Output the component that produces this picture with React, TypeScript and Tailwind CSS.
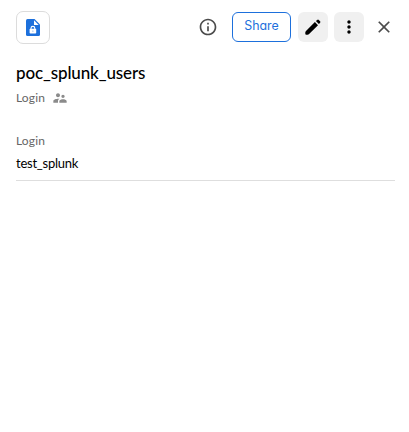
import React from "react";
import { MdInfoOutline, MdMoreVert, MdSupervisorAccount, MdClose } from "react-icons/md";

function SecureNoteIcon() {
  return (
    <svg width="14" height="17" viewBox="0 0 14 17">
      <path d="M1.5 0H8.5L14 5.5V15.5Q14 17 12.5 17H1.5Q0 17 0 15.5V1.5Q0 0 1.5 0Z" fill="#1d70dc" />
      <path d="M8 1.3V6H12.7Z" fill="white" />
      <rect x="3.6" y="9.7" width="6.6" height="4.8" rx=".8" fill="white" />
      <path d="M5 10V9.3a1.9 1.9 0 0 1 3.8 0V10" fill="none" stroke="white" strokeWidth="1.1" />
      <circle cx="6.9" cy="12.1" r=".6" fill="#6ca2e8" />
    </svg>
  );
}

function PencilIcon() {
  return (
    <svg width="16" height="16" viewBox="0 0 16 16" fill="black">
      <path d="M1 12 9.9 3.1 13 6.2 4.1 15.1Q3.5 15.7 2.5 15.7H1.2Q.3 15.7.3 14.8V13.6Q.3 12.7 1 12Z" />
      <path d="M10.9 2.1 12.2.9Q13 .2 13.8.9L15.1 2.2Q15.8 3 15.1 3.8L13.9 5.1Z" />
    </svg>
  );
}

export default function App() {
  return (
    <main className="h-[432px] w-[409px] bg-white pl-4 pr-[15px] pt-[11px] font-['Lato',sans-serif] text-black">
      <header className="flex h-[33px] items-center justify-between">
        <div className="flex h-[33px] w-[34px] items-center justify-center rounded-[7px] border border-[#dcdcdc]">
          <SecureNoteIcon />
        </div>
        <div className="flex items-center pb-[2px]">
          <button aria-label="Information" className="mr-[14px] text-[#4b4b4b]"><MdInfoOutline size={20} /></button>
          <button className="mr-[7px] h-[30px] w-[59px] rounded-[6px] border border-[#1d70dc] pb-[2px] font-['Inter',sans-serif] text-[12.4px] leading-[26px] text-[#1d70dc] [font-feature-settings:'cv11']">Share</button>
          <button aria-label="Edit" className="mr-[6px] flex size-[30px] items-center justify-center rounded-[6px] bg-[#f0f0f0]"><PencilIcon /></button>
          <button aria-label="More" className="mr-[10px] flex size-[30px] items-center justify-center rounded-[6px] bg-[#f0f0f0]"><MdMoreVert size={20} /></button>
          <button aria-label="Close" className="flex size-5 items-center justify-center text-[#4b4b4b]"><MdClose size={20} /></button>
        </div>
      </header>
      <h1 className="mt-[18px] h-[22px] whitespace-nowrap text-[17px] font-medium leading-[21px] tracking-[-0.13px]">poc_splunk_users</h1>
      <div className="mt-[6px] flex h-4 items-center text-[12px] leading-4 text-[#666]">
        <span className="w-[36px] tracking-[0.15px]">Login</span>
        <MdSupervisorAccount size={16} className="text-[#8b8b8b]" />
      </div>
      <section className="mr-[-1px] mt-[27px] border-b border-[#dedede]">
        <div className="h-4 text-[12px] leading-4 tracking-[0.15px] text-[#666]">Login</div>
        <div className="mt-[5px] h-[26px] text-[13px] leading-[18px] tracking-[-0.24px]">test_splunk</div>
      </section>
    </main>
  );
}
